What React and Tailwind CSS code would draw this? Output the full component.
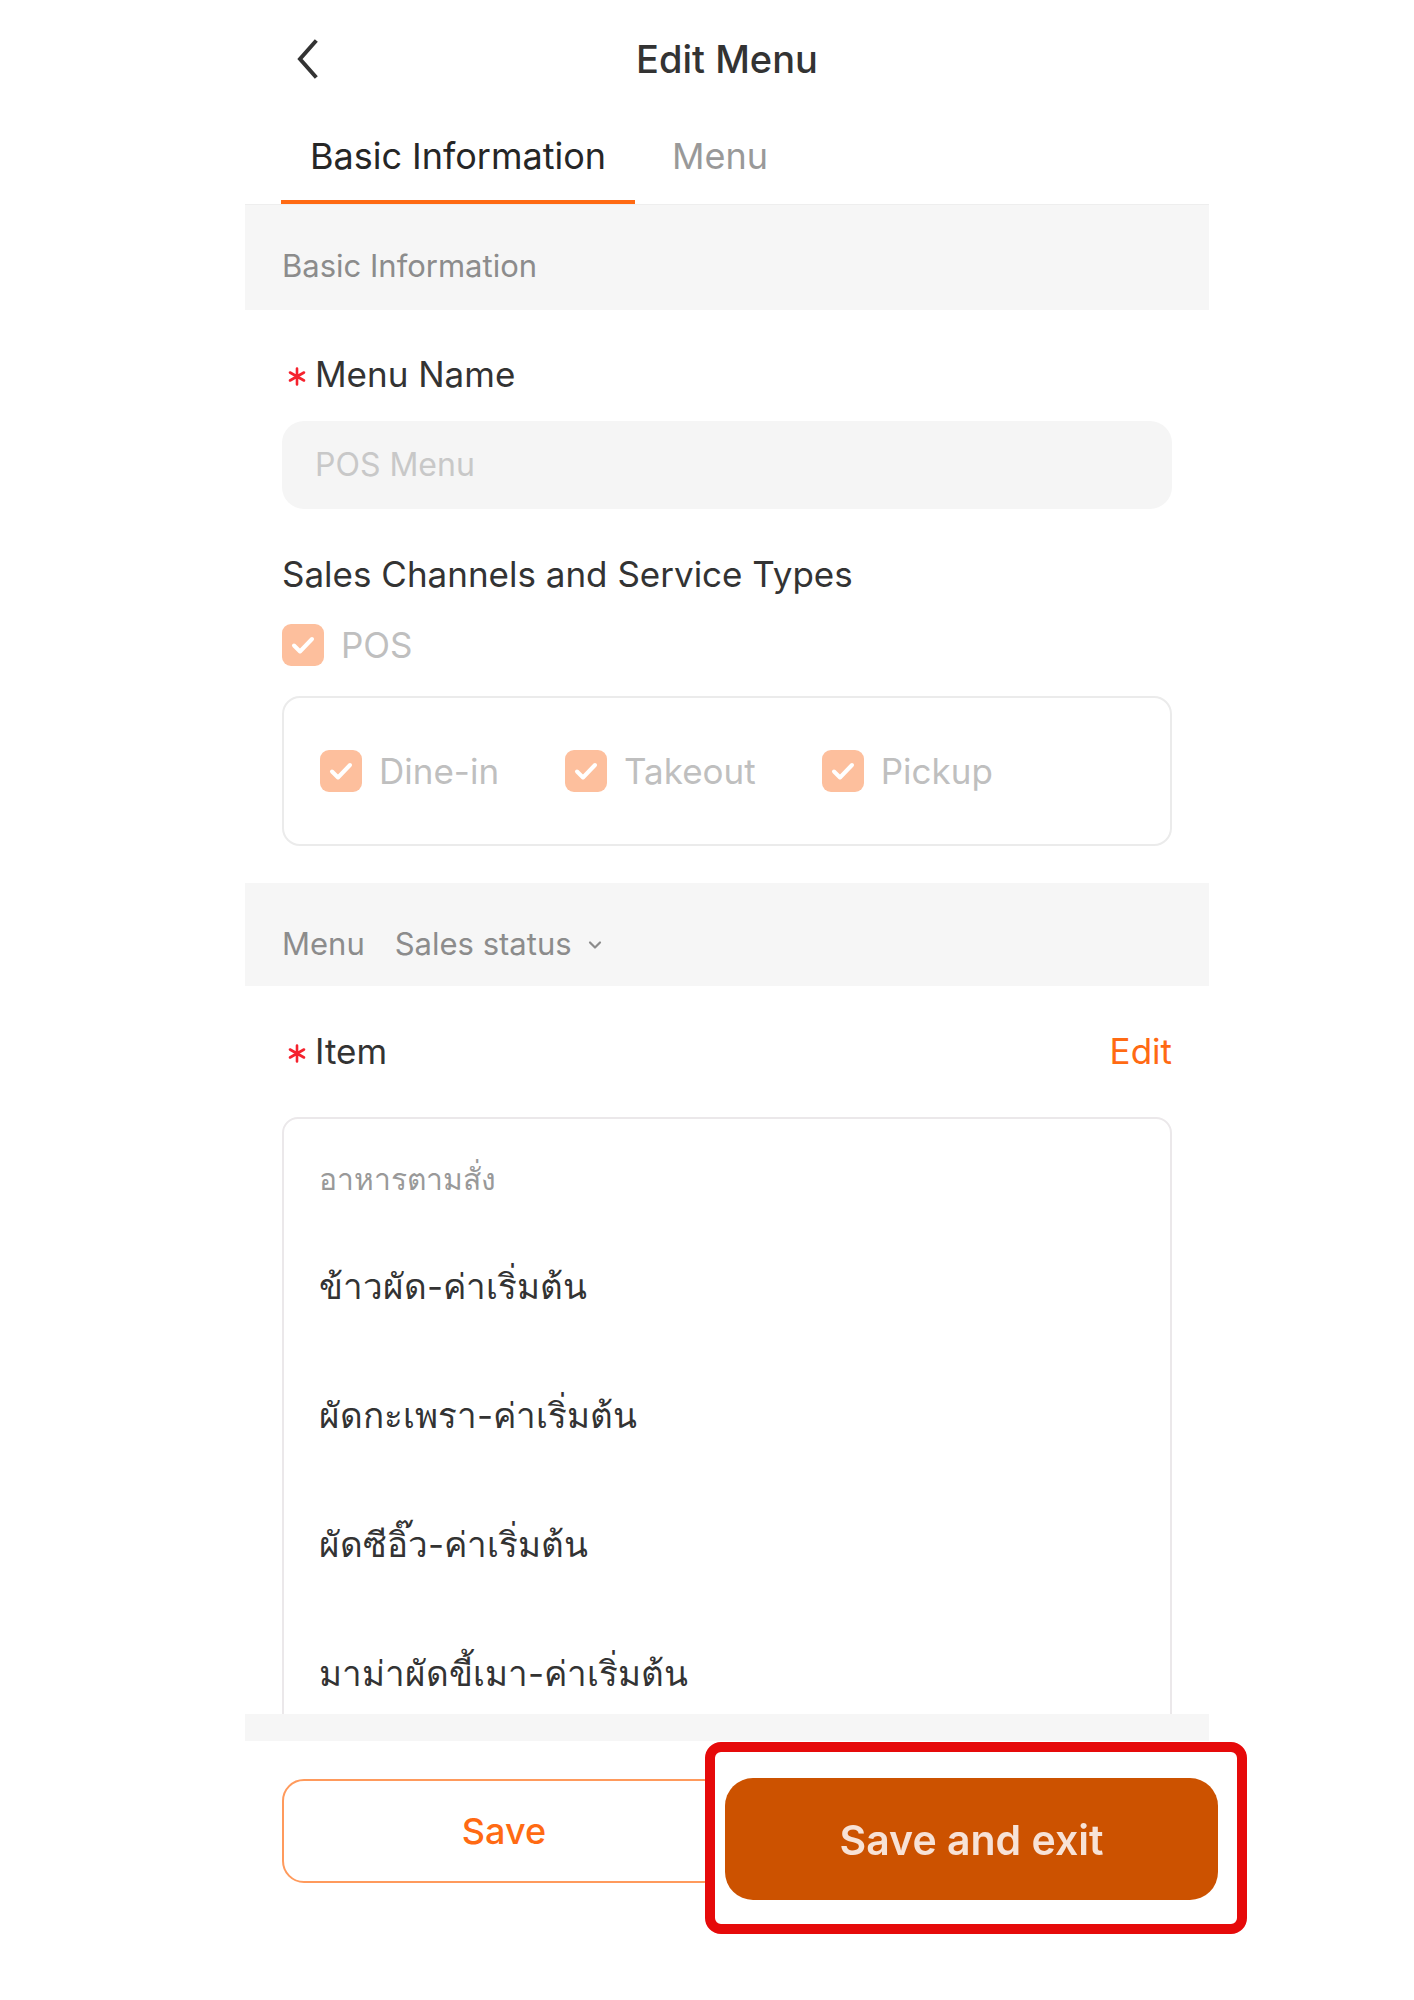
const font = { fontFamily: "Inter, 'Noto Sans', 'DejaVu Sans', sans-serif" }

const items = ['ข้าวผัด-ค่าเริ่มต้น', 'ผัดกะเพรา-ค่าเริ่มต้น', 'ผัดซีอิ๊ว-ค่าเริ่มต้น', 'มาม่าผัดขี้เมา-ค่าเริ่มต้น']

function Check({ label, className = '' }) {
  return (
    <div className={`flex items-center gap-[17px] ${className}`}>
      <span className="flex h-[42px] w-[42px] items-center justify-center rounded-[9px] bg-[#fdbf9d]">
        <svg width="42" height="42" viewBox="0 0 42 42" fill="none" stroke="white" strokeWidth="4" strokeLinecap="round" strokeLinejoin="round">
          <path d="M12 21.5l6 6L30 15" />
        </svg>
      </span>
      <span className="text-[35px] leading-none text-[#bfbfbf]">{label}</span>
    </div>
  )
}

function Required({ children }) {
  return (
    <div className="flex items-center text-[35px] leading-[42px] text-[#333]">
      <svg className="ml-[6px] mr-[9px] mt-[4px]" width="18" height="19" viewBox="0 0 18 19" fill="none" stroke="#f5222d" strokeWidth="2.6" strokeLinecap="round">
        <path d="M9 1.5v16M2 5.5l14 8M2 13.5l14-8" />
      </svg>
      {children}
    </div>
  )
}

export default function App() {
  return (
    <div className="min-h-[2000px] w-[1414px] bg-white" style={font}>
      <div className="ml-[245px] w-[964px]">
        {/* Header */}
        <div className="grid h-[118px] grid-cols-[1fr_auto_1fr] items-center">
          <div className="pl-[50px]">
            <svg width="26" height="40" viewBox="0 0 26 40" fill="none" stroke="#333" strokeWidth="4" strokeLinecap="square">
              <path d="M20 3L5 20l15 17" />
            </svg>
          </div>
          <h1 className="text-[38px] font-medium text-[#333]">Edit Menu</h1>
          <div />
        </div>

        {/* Tabs */}
        <div className="flex h-[87px] items-stretch border-b border-[#eeeeee] pl-[36px]">
          <div className="flex w-[354px] flex-col items-center justify-center border-b-[4px] border-[#ff6a13] pb-[6px] text-[36px] text-[#262626]">
            Basic Information
          </div>
          <div className="flex items-center pb-[10px] pl-[37px] text-[36px] text-[#999]">Menu</div>
        </div>

        <div className="flex h-[105px] items-center bg-[#f6f6f6] pl-[37px] pt-[18px] text-[31px] text-[#8c8c8c]">
          Basic Information
        </div>

        <div className="px-[37px]">
          <div className="pt-[43px]">
            <Required>Menu Name</Required>
          </div>
          <div className="mt-[26px] flex h-[88px] items-center rounded-[22px] bg-[#f5f5f5] pl-[33px] text-[32px] text-[#c8c8c8]">
            POS Menu
          </div>
          <div className="mt-[44px] text-[35px] leading-[42px] text-[#333]">Sales Channels and Service Types</div>
          <Check label="POS" className="mt-[29px]" />
          <div className="mt-[30px] flex h-[150px] items-center gap-[66px] rounded-[18px] border-2 border-[#ebebeb] pl-[36px]">
            <Check label="Dine-in" />
            <Check label="Takeout" />
            <Check label="Pickup" />
          </div>
        </div>

        <div className="mt-[37px] flex h-[103px] items-center gap-[30px] bg-[#f6f6f6] pl-[37px] pt-[20px] text-[31px] text-[#8c8c8c]">
          <span>Menu</span>
          <span className="flex items-center gap-[16px]">
            Sales status
            <svg width="14" height="10" viewBox="0 0 14 10" fill="none" stroke="#8c8c8c" strokeWidth="2.2" strokeLinecap="round" strokeLinejoin="round">
              <path d="M2 2.5l5 5 5-5" />
            </svg>
          </span>
        </div>

        <div className="px-[37px]">
          <div className="flex items-center justify-between pt-[44px]">
            <Required>Item</Required>
            <span className="text-[35px] leading-[42px] text-[#ff6a13]">Edit</span>
          </div>
          <div className="mt-[45px] h-[597px] overflow-hidden">
            <div className="h-[700px] rounded-[16px] border-2 border-[#ebe8ea] pl-[35px]">
              <div className="pt-[38px] text-[30px] leading-[44px] text-[#999]">อาหารตามสั่ง</div>
              <div className="-mt-[5px] flex flex-col">
                {items.map((it) => (
                  <div key={it} className="mt-[52px] text-[35px] leading-[77px] text-[#333]">
                    {it}
                  </div>
                ))}
              </div>
            </div>
          </div>
        </div>

        {/* Footer */}
        <div className="h-[27px] bg-[#f6f6f6]" />
        <div className="relative flex px-[37px] pt-[38px]">
          <button className="flex h-[104px] w-[444px] items-center justify-center rounded-[22px] border-2 border-[#ff9a5c] text-[36px] font-medium text-[#ff6a13]">
            Save
          </button>
          <div className="absolute left-[460px] top-[1px] h-[192px] w-[542px] rounded-[16px] border-[10px] border-[#e60a0a] bg-white pl-[10px] pr-[19px] pt-[26px]">
            <button className="flex h-[122px] w-full items-center justify-center rounded-[28px] bg-[#cc5200] pt-[4px] text-[41px] font-semibold text-[#f7e2d6] blur-[0.6px]">
              Save and exit
            </button>
          </div>
        </div>
      </div>
    </div>
  )
}
